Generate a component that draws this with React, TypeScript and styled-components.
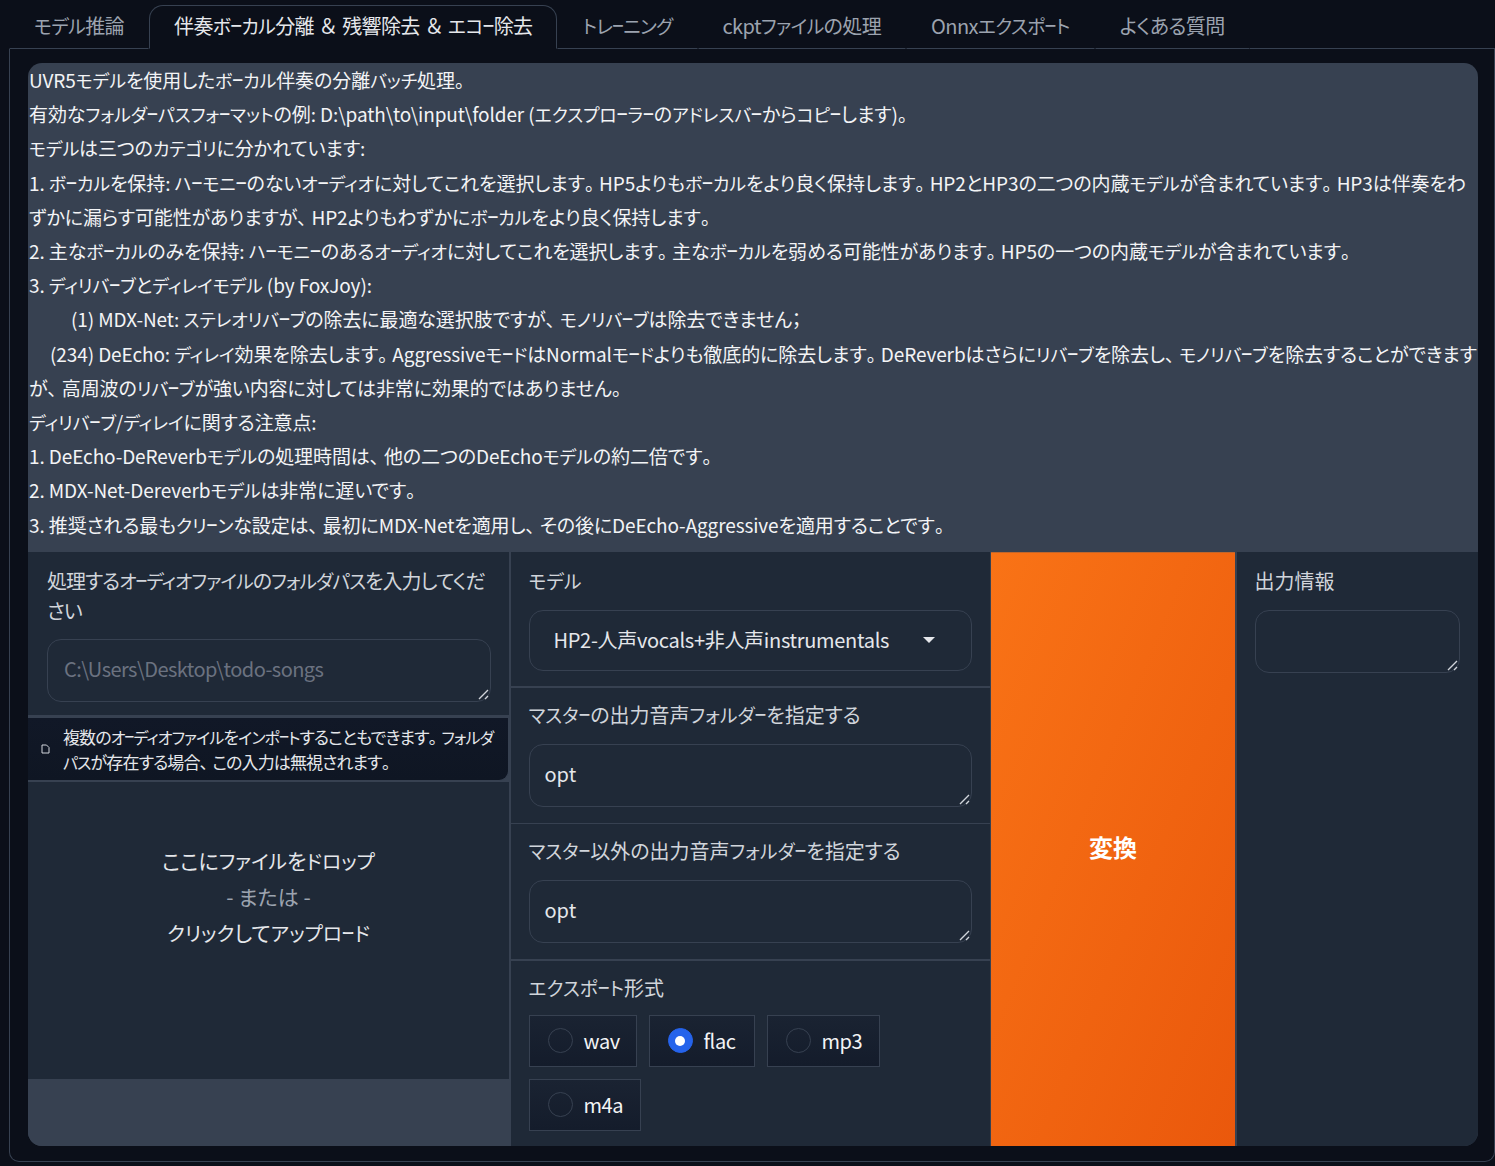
import React from "react";
import styled, { createGlobalStyle } from "styled-components";

const FONT = `"Noto Sans CJK JP", "Noto Sans", sans-serif`;

const GlobalStyle = createGlobalStyle`
  html, body {
    margin: 0;
    height: 100%;
    overflow: hidden;
    background: #0b0f19;
    font-family: ${FONT};
    font-feature-settings: "palt";
    color: #e5e7eb;
  }
  * { box-sizing: border-box; }
`;

const Page = styled.div`
  height: 1166px;
  padding: 4px 0 4px 9px;
  display: flex;
  flex-direction: column;
`;

const TabBar = styled.div`
  height: 44px;
  display: flex;
  align-items: stretch;
  flex-shrink: 0;
`;

const Tab = styled.div<{ $active?: boolean }>`
  padding: 0 24px 4px;
  display: flex;
  align-items: center;
  font-size: 20px;
  letter-spacing: -0.6px;
  white-space: pre;
  color: ${(p) => (p.$active ? "#e5e7eb" : "#9ca3af")};
  background: #0b0f19;
  border: 1px solid ${(p) => (p.$active ? "#374151" : "transparent")};
  border-bottom: 1px solid ${(p) => (p.$active ? "#0b0f19" : "#374151")};
  border-radius: ${(p) => (p.$active ? "14px 14px 0 0" : "0")};
  position: relative;
  top: 1px;
`;

const TabFill = styled.div`
  flex: 1;
  border-bottom: 1px solid #374151;
  position: relative;
  top: 1px;
`;

const TabPanel = styled.div`
  flex: 1;
  border: 1px solid #374151;
  border-top: none;
  border-radius: 0 0 10px 10px;
  padding: 15px 16px 15px 18px;
`;

const Card = styled.div`
  height: 100%;
  border-radius: 14px;
  overflow: hidden;
  background: #374151;
  display: flex;
  flex-direction: column;
`;

const Notes = styled.div`
  height: 489px;
  padding: 0 0 0 1px;
  font-size: 19px;
  line-height: 34.2px;
  letter-spacing: -0.1px;
  color: #f3f4f6;
  flex-shrink: 0;
`;

const Indent = styled.span<{ $w: number }>`
  display: inline-block;
  width: ${(p) => p.$w}px;
`;

const Kana = styled.span`
  font-size: 0.94em;
  line-height: 1;
`;

// the long vowel mark is drawn short in the reference
const Choon = styled.span`
  font-size: 0.6em;
  font-weight: 700;
  line-height: 1;
  vertical-align: 0.25em;
`;

const Punct = styled.span`
  letter-spacing: 0.25em;
`;

const Amp = styled.span`
  font-feature-settings: normal;
  margin: 0 0.22em;
`;

const Columns = styled.div`
  flex: 1;
  display: grid;
  grid-template-columns: 481px 479px 244px 1fr;
  column-gap: 1.5px;
  min-height: 0;
`;

const Stack = styled.div`
  display: flex;
  flex-direction: column;
  row-gap: 1.5px;
  min-height: 0;
`;

const Block = styled.div<{ $h?: number; $grow?: boolean; $top?: number; $left?: number }>`
  background: #1f2937;
  padding: ${(p) => p.$top ?? 14}px 18px 0 ${(p) => p.$left ?? 18}px;
  height: ${(p) => (p.$h ? `${p.$h}px` : "auto")};
  flex: ${(p) => (p.$grow ? "1" : "none")};
`;

const Label = styled.div<{ $gap?: number }>`
  font-size: 20px;
  line-height: 30px;
  color: #d1d5db;
  margin-bottom: ${(p) => p.$gap ?? 13}px;
`;

const TightLabel = styled(Label)`
  letter-spacing: -0.95px;
`;

const TextBox = styled.div<{ $h?: number }>`
  position: relative;
  height: ${(p) => p.$h ?? 63}px;
  border: 1px solid #374151;
  border-radius: 14px;
  padding: 14px 15px;
  font-size: 20px;
  line-height: 30px;
  color: #e5e7eb;
  background: #1f2937;
`;

const Placeholder = styled.span`
  color: #6b7280;
  letter-spacing: -0.55px;
  margin-left: 1px;
`;

const Grip = styled.svg`
  position: absolute;
  right: 1px;
  bottom: 1px;
  width: 11px;
  height: 11px;
`;

const SelectBox = styled(TextBox)`
  padding: 13px 36px 15px 24px;
  display: flex;
  align-items: center;
  justify-content: space-between;
  letter-spacing: -0.3px;
`;

const Caret = styled.span`
  width: 0;
  height: 0;
  border-left: 6px solid transparent;
  border-right: 6px solid transparent;
  border-top: 6px solid #e5e7eb;
`;

const FileNote = styled.div`
  height: 64px;
  background: linear-gradient(to bottom, #111827, #0f1623);
  border-top: 1px solid #374151;
  border-bottom: 1px solid #374151;
  border-right: 1px solid #374151;
  border-radius: 0 0 10px 0;
  display: flex;
  align-items: center;
  padding: 0 10px 0 13px;
  gap: 13px;
  font-size: 17px;
  letter-spacing: -0.9px;
  line-height: 25px;
  color: #e5e7eb;
`;

const FileIcon = styled.svg`
  width: 9px;
  height: 10px;
  flex-shrink: 0;
`;

const DropZone = styled.div`
  height: 297px;
  background: #1f2937;
  display: flex;
  flex-direction: column;
  align-items: center;
  padding-top: 60px;
  font-size: 21px;
  line-height: 36px;
  color: #e5e7eb;
`;

const DropOr = styled.span`
  color: #9ca3af;
`;

const Filler = styled.div`
  flex: 1;
  background: #374151;
`;

const Radios = styled.div`
  display: flex;
  flex-wrap: wrap;
  gap: 12px;
`;

const Radio = styled.div<{ $width: number }>`
  width: ${(p) => p.$width}px;
  height: 52px;
  display: flex;
  align-items: center;
  padding-left: 18px;
  gap: 11px;
  font-size: 20px;
  letter-spacing: -0.4px;
  color: #f3f4f6;
  border: 1px solid #374151;
  background: linear-gradient(to top, #141c2b, #1a2332);
`;

const Dot = styled.span<{ $on?: boolean }>`
  width: 25px;
  height: 25px;
  border-radius: 50%;
  border: 1px solid ${(p) => (p.$on ? "#2563eb" : "#374151")};
  background: ${(p) => (p.$on ? "#2563eb" : "transparent")};
  display: flex;
  align-items: center;
  justify-content: center;
  &::after {
    content: "";
    display: ${(p) => (p.$on ? "block" : "none")};
    width: 10px;
    height: 10px;
    border-radius: 50%;
    background: #fff;
  }
`;

const ConvertButton = styled.button`
  border: none;
  border-top: 1px solid #c2662a;
  padding: 0 0 6px;
  margin: 0;
  font-family: ${FONT};
  font-size: 24px;
  font-weight: 700;
  color: #fff;
  background: linear-gradient(to bottom right, #f97316, #ea580c);
`;

const Jp = ({ children }: { children: string }) => (
  <>
    {children.split(/(ー|[\u30A0-\u30FB\u30FD-\u30FF]+|[、。；]|＆)/).map((part, i) => {
      if (i % 2 === 0) return part;
      if (part === "ー") return <Choon key={i}>{part}</Choon>;
      if (part === "＆") return <Amp key={i}>{part}</Amp>;
      return /[、。；]/.test(part) ? <Punct key={i}>{part}</Punct> : <Kana key={i}>{part}</Kana>;
    })}
  </>
);

const tabs: [string, boolean?][] = [
  ["モデル推論"],
  ["伴奏ボーカル分離＆残響除去＆エコー除去", true],
  ["トレーニング"],
  ["ckptファイルの処理"],
  ["Onnxエクスポート"],
  ["よくある質問"],
];

const notes = [
  "UVR5モデルを使用したボーカル伴奏の分離バッチ処理。",
  "有効なフォルダーパスフォーマットの例: D:\\path\\to\\input\\folder (エクスプローラーのアドレスバーからコピーします)。",
  "モデルは三つのカテゴリに分かれています:",
  "1. ボーカルを保持: ハーモニーのないオーディオに対してこれを選択します。HP5よりもボーカルをより良く保持します。HP2とHP3の二つの内蔵モデルが含まれています。HP3は伴奏をわずかに漏らす可能性がありますが、HP2よりもわずかにボーカルをより良く保持します。",
  "2. 主なボーカルのみを保持: ハーモニーのあるオーディオに対してこれを選択します。主なボーカルを弱める可能性があります。HP5の一つの内蔵モデルが含まれています。",
  "3. ディリバーブとディレイモデル (by FoxJoy):",
  "(1) MDX-Net: ステレオリバーブの除去に最適な選択肢ですが、モノリバーブは除去できません；",
  "(234) DeEcho: ディレイ効果を除去します。AggressiveモードはNormalモードよりも徹底的に除去します。DeReverbはさらにリバーブを除去し、モノリバーブを除去することができますが、高周波のリバーブが強い内容に対しては非常に効果的ではありません。",
  "ディリバーブ/ディレイに関する注意点:",
  "1. DeEcho-DeReverbモデルの処理時間は、他の二つのDeEchoモデルの約二倍です。",
  "2. MDX-Net-Dereverbモデルは非常に遅いです。",
  "3. 推奨される最もクリーンな設定は、最初にMDX-Netを適用し、その後にDeEcho-Aggressiveを適用することです。",
];

const indents: Record<number, number> = { 6: 42, 7: 21 };

const GripIcon = () => (
  <Grip viewBox="0 0 11 11">
    <path d="M1 10 L10 1 M7 10 L10 7" stroke="#d1d5db" strokeWidth="1.4" fill="none" />
  </Grip>
);

export default function App() {
  return (
    <>
      <GlobalStyle />
      <Page>
        <TabBar>
          {tabs.map(([name, active]) => (
            <Tab key={name} $active={active}>
              <span><Jp>{name}</Jp></span>
            </Tab>
          ))}
          <TabFill />
        </TabBar>
        <TabPanel>
          <Card>
            <Notes>
              {notes.map((line, i) => (
                <div key={i}>
                  {indents[i] && <Indent $w={indents[i]} />}
                  <Jp>{line}</Jp>
                </div>
              ))}
            </Notes>
            <Columns>
              <Stack>
                <Block $h={163} $left={19}>
                  <TightLabel $gap={13}><Jp>処理するオーディオファイルのフォルダパスを入力してください</Jp></TightLabel>
                  <TextBox>
                    <Placeholder>C:\Users\Desktop\todo-songs</Placeholder>
                    <GripIcon />
                  </TextBox>
                </Block>
                <FileNote>
                  <FileIcon viewBox="0 0 9 10">
                    <path d="M1 1 H5.5 L8 3.5 V9 H1 Z" stroke="#d1d5db" strokeWidth="1" fill="none" />
                  </FileIcon>
                  <span><Jp>複数のオーディオファイルをインポートすることもできます。フォルダパスが存在する場合、この入力は無視されます。</Jp></span>
                </FileNote>
                <DropZone>
                  <span><Jp>ここにファイルをドロップ</Jp></span>
                  <DropOr>- または -</DropOr>
                  <span><Jp>クリックしてアップロード</Jp></span>
                </DropZone>
                <Filler />
              </Stack>
              <Stack>
                <Block $h={134}>
                  <Label $gap={14}><Jp>モデル</Jp></Label>
                  <SelectBox $h={61}>
                    HP2-人声vocals+非人声instrumentals
                    <Caret />
                  </SelectBox>
                </Block>
                <Block $h={135} $top={12}>
                  <Label $gap={14}><Jp>マスターの出力音声フォルダーを指定する</Jp></Label>
                  <TextBox>
                    opt
                    <GripIcon />
                  </TextBox>
                </Block>
                <Block $h={135} $top={12}>
                  <Label $gap={14}><Jp>マスター以外の出力音声フォルダーを指定する</Jp></Label>
                  <TextBox>
                    opt
                    <GripIcon />
                  </TextBox>
                </Block>
                <Block $grow $top={12}>
                  <Label $gap={12}><Jp>エクスポート形式</Jp></Label>
                  <Radios>
                    <Radio $width={108}><Dot />wav</Radio>
                    <Radio $width={106}><Dot $on />flac</Radio>
                    <Radio $width={113}><Dot />mp3</Radio>
                    <Radio $width={112}><Dot />m4a</Radio>
                  </Radios>
                </Block>
              </Stack>
              <ConvertButton>変換</ConvertButton>
              <Stack>
                <Block $grow>
                  <Label $gap={14}>出力情報</Label>
                  <TextBox>
                    <GripIcon />
                  </TextBox>
                </Block>
              </Stack>
            </Columns>
          </Card>
        </TabPanel>
      </Page>
    </>
  );
}
